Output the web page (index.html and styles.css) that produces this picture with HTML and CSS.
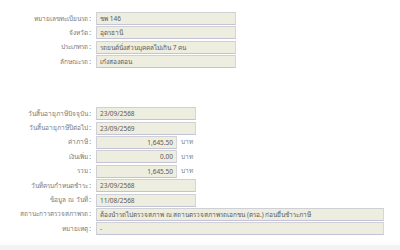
FILE: index.html
```html
<!DOCTYPE html>
<html lang="th">
<head>
<meta charset="utf-8">
<link rel="stylesheet" href="styles.css">
</head>
<body>
<div class="page">
  <div class="group g1">
    <div class="row"><span class="lbl">หมายเลขทะเบียนรถ :</span><span class="fld w140">ชพ 146</span></div>
    <div class="row"><span class="lbl">จังหวัด :</span><span class="fld w140">อุดรธานี</span></div>
    <div class="row"><span class="lbl">ประเภทรถ :</span><span class="fld w140">รถยนต์นั่งส่วนบุคคลไม่เกิน 7 คน</span></div>
    <div class="row"><span class="lbl">ลักษณะรถ :</span><span class="fld w140">เก๋งสองตอน</span></div>
  </div>
  <div class="group g2">
    <div class="row"><span class="lbl">วันสิ้นอายุภาษีปัจจุบัน :</span><span class="fld w100">23/09/2568</span></div>
    <div class="row"><span class="lbl">วันสิ้นอายุภาษีปีต่อไป :</span><span class="fld w100">23/09/2569</span></div>
    <div class="row"><span class="lbl">ค่าภาษี :</span><span class="fld w81 num">1,645.50</span><span class="unit">บาท</span></div>
    <div class="row"><span class="lbl">เงินเพิ่ม :</span><span class="fld w81 num">0.00</span><span class="unit">บาท</span></div>
    <div class="row"><span class="lbl">รวม :</span><span class="fld w81 num">1,645.50</span><span class="unit">บาท</span></div>
    <div class="row"><span class="lbl">วันที่ครบกำหนดชำระ :</span><span class="fld w100">23/09/2568</span></div>
    <div class="row"><span class="lbl">ข้อมูล ณ วันที่ :</span><span class="fld w100">11/08/2568</span></div>
    <div class="row"><span class="lbl">สถานะการตรวจสภาพรถ :</span><span class="fld w288">ต้องนำรถไปตรวจสภาพ ณ สถานตรวจสภาพรถเอกชน (ตรอ.) ก่อนยื่นชำระภาษี</span></div>
    <div class="row"><span class="lbl">หมายเหตุ :</span><span class="fld w288">-</span></div>
  </div>
</div>
<div class="foot"></div>
</body>
</html>
```
FILE: styles.css
```css
html, body {
  margin: 0;
  padding: 0;
  background: #ffffff;
}
body {
  width: 400px;
  height: 250px;
  overflow: hidden;
  position: relative;
  font-family: Tahoma, "Noto Sans", "DejaVu Sans", sans-serif;
  font-size: 6.5px;
}
.page {
  display: flex;
  flex-direction: column;
}
.group {
  display: flex;
  flex-direction: column;
  gap: 1.4px;
}
.g1 { margin-top: 12px; }
.g2 { margin-top: 39px; }
.row {
  display: flex;
  align-items: center;
  height: 13px;
}
.lbl {
  width: 93px;
  text-align: right;
  color: #7a7a7a;
  white-space: nowrap;
  padding-right: 2px;
  box-sizing: border-box;
  flex: none;
  margin-right: 3px;
}
.fld {
  box-sizing: border-box;
  height: 13px;
  line-height: 11px;
  padding: 0 3px;
  background: #eeeee0;
  border: 1px solid #cfcfd6;
  border-bottom-color: #c4c2d8;
  border-right-color: #d6d6d6;
  color: #5a5a5a;
  white-space: nowrap;
  overflow: hidden;
  flex: none;
}
.w140 { width: 140px; }
.w100 { width: 100px; }
.w81 { width: 81px; }
.w288 { width: 288px; }
.num { text-align: right; }
.unit {
  margin-left: 4px;
  color: #808080;
}
.foot {
  position: absolute;
  left: 0;
  right: 0;
  bottom: 0;
  height: 5px;
  background: #f3f3f3;
}
```
